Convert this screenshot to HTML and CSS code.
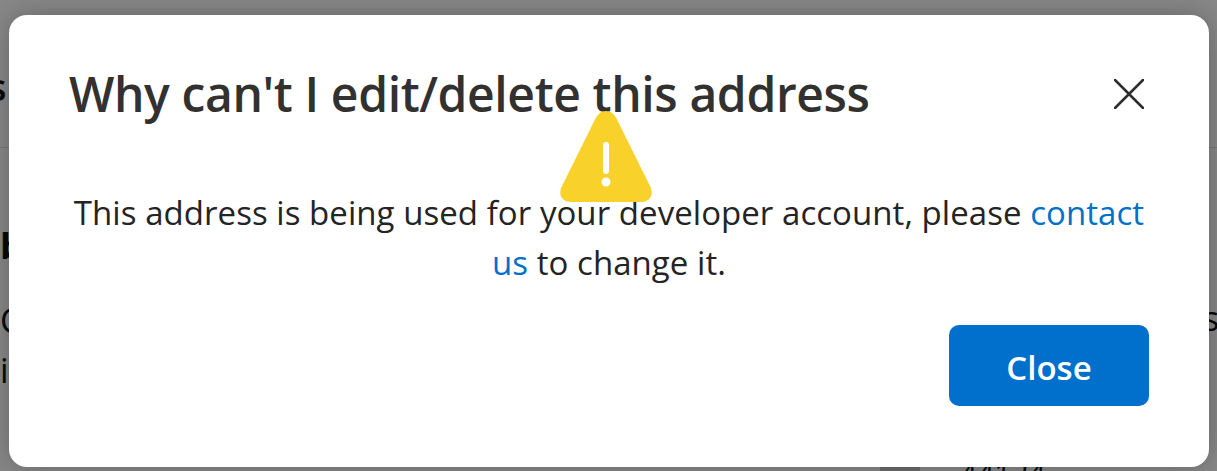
FILE: index.html
```html
<!DOCTYPE html>
<html lang="en">
<head>
    <meta charset="UTF-8">
    <meta name="viewport" content="width=device-width, initial-scale=1.0">
    <title>Why can't I edit/delete this address</title>
    <link rel="stylesheet" href="styles.css">
</head>
<body>
    <!-- page behind the dialog, only the edges show -->
    <div class="page">
        <span class="peek peek-s">s</span>
        <div class="peek-rule"></div>
        <span class="peek peek-b">b</span>
        <span class="peek peek-c">C</span>
        <span class="peek peek-i">i</span>
        <span class="peek peek-r">s</span>
        <div class="peek-cell"></div>
        <span class="peek peek-zip">44124</span>
    </div>
    <div class="backdrop"></div>

    <div class="dialog" role="dialog">
        <div class="dialog-head">
            <h1>Why can't I edit/delete this address</h1>
            <button class="dialog-x" aria-label="Close">
                <svg width="30" height="30" viewBox="0 0 30 30">
                    <path d="M1 1 L29 29 M29 1 L1 29" stroke="#2f2d2c" stroke-width="2.5" stroke-linecap="round" fill="none"/>
                </svg>
            </button>
        </div>
        <svg class="warn" width="94" height="94" viewBox="0 0 94 94">
            <path d="M47 1 C52 1 55 4 57.500 8.500 L91.500 77 C95 85 91 92 82 92 L12 92 C3 92 -1 85 2.500 77 L36.500 8.500 C39 4 42 1 47 1 Z" fill="#f9d12b"/>
            <rect x="44" y="32" width="6" height="32" rx="3" fill="#fff"/>
            <circle cx="47" cy="72" r="4.500" fill="#fff"/>
        </svg>
        <p class="dialog-text">This address is being used for your developer account, please <a href="#">contact us</a> to change it.</p>
        <div class="dialog-foot">
            <button class="btn-close">Close</button>
        </div>
    </div>
</body>
</html>
```
FILE: styles.css
```css
html, body {
    margin: 0;
    height: 100%;
}
body {
    width: 1217px;
    height: 471px;
    overflow: hidden;
    position: relative;
    font-family: "Open Sans", "Noto Sans", Arial, sans-serif;
    background: #fff;
}
.page {
    position: absolute;
    inset: 0;
    color: #111;
    font-size: 34px;
}
.peek {
    position: absolute;
    line-height: 40px;
}
.peek-s { left: -12px; top: 66px; font-size: 38px; font-weight: 600; }
.peek-b { left: 0; top: 226px; font-size: 36px; font-weight: 700; }
.peek-c { left: 0; top: 300px; }
.peek-i { left: 0; top: 350px; }
.peek-r { left: 1203px; top: 298px; }
.peek-zip { left: 960px; top: 453px; font-size: 30px; }
.peek-rule {
    position: absolute;
    left: 0;
    right: 0;
    top: 147px;
    height: 1px;
    background: #e0e0e0;
}
.peek-cell {
    position: absolute;
    left: 880px;
    top: 466px;
    width: 40px;
    height: 5px;
    background: #ccc;
}
.backdrop {
    position: absolute;
    inset: 0;
    background: rgba(0, 0, 0, 0.47);
}
.dialog {
    position: absolute;
    left: 9px;
    top: 15px;
    width: 1200px;
    height: 452px;
    box-sizing: border-box;
    padding: 47px 60px 61px;
    background: #fff;
    border-radius: 18px;
    box-shadow: 0 0 24px rgba(0, 0, 0, 0.25);
    display: flex;
    flex-direction: column;
}
.dialog-head {
    display: flex;
    justify-content: space-between;
    align-items: center;
    height: 64px;
}
.dialog-head h1 {
    margin: 0;
    font-size: 48px;
    font-weight: 600;
    line-height: 64px;
    color: #323130;
    letter-spacing: -0.38px;
}
.dialog-x {
    border: 0;
    padding: 0;
    margin-right: 5px;
    background: none;
    width: 30px;
    height: 30px;
    cursor: pointer;
}
.warn {
    position: absolute;
    left: 550px;
    top: 95px;
}
.dialog-text {
    margin: 62px 0 0;
    text-align: center;
    font-size: 33px;
    line-height: 50px;
    color: #242424;
    letter-spacing: 0.05px;
}
.dialog-text a {
    color: #0070c9;
    text-decoration: none;
}
.dialog-foot {
    margin-top: auto;
    display: flex;
    justify-content: flex-end;
}
.btn-close {
    width: 200px;
    height: 81px;
    padding: 3px 0 0;
    border: 0;
    border-radius: 10px;
    background: #0070cc;
    color: #fff;
    font-family: inherit;
    font-size: 33px;
    font-weight: 600;
    cursor: pointer;
}
```
